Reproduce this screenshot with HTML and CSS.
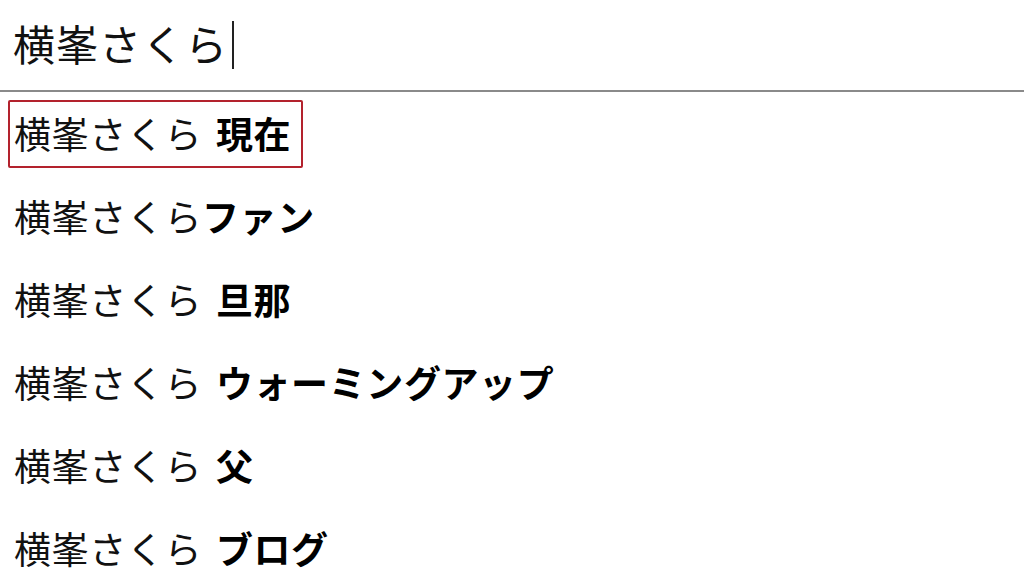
FILE: index.html
```html
<!DOCTYPE html>
<html lang="ja">
<head>
<meta charset="utf-8">
<link rel="stylesheet" href="styles.css">
</head>
<body>
<div class="search">
  <span class="query">横峯さくら</span><span class="cursor"></span>
</div>
<ul class="list">
  <li class="row"><span class="item active">横峯さくら <b>現在</b></span></li>
  <li class="row"><span class="item">横峯さくら<b>ファン</b></span></li>
  <li class="row"><span class="item">横峯さくら <b>旦那</b></span></li>
  <li class="row"><span class="item">横峯さくら <b>ウォーミングアップ</b></span></li>
  <li class="row"><span class="item">横峯さくら <b>父</b></span></li>
  <li class="row"><span class="item">横峯さくら <b>ブログ</b></span></li>
</ul>
</body>
</html>
```
FILE: styles.css
```css
html, body {
  margin: 0;
  padding: 0;
  background: #fff;
  overflow: hidden;
}
body {
  font-family: "Noto Sans CJK JP", "Noto Sans", sans-serif;
  color: #111;
  width: 1024px;
  height: 575px;
}
.search {
  height: 86px;
  padding: 0 0 4px 13px;
  border-bottom: 2px solid #8a8a8a;
  display: flex;
  align-items: center;
}
.query {
  font-size: 42px;
  letter-spacing: 1px;
  line-height: 1;
}
.cursor {
  display: inline-block;
  width: 2px;
  height: 48px;
  background: #222;
  margin-left: 4px;
  margin-top: 4px;
}
.list {
  list-style: none;
  margin: 0;
  padding: 0;
}
.row {
  height: 83px;
  display: flex;
  align-items: center;
  padding-left: 8px;
}
.item {
  display: flex;
  align-items: center;
  white-space: pre;
  font-size: 37px;
  letter-spacing: 0.6px;
  word-spacing: 5px;
  line-height: 1;
  height: 64px;
  padding: 0 10px 0 4px;
  border: 2px solid transparent;
  border-radius: 2px;
}
.item b {
  font-weight: 700;
  color: #000;
}
.item.active {
  border-color: #b3222d;
}
```
